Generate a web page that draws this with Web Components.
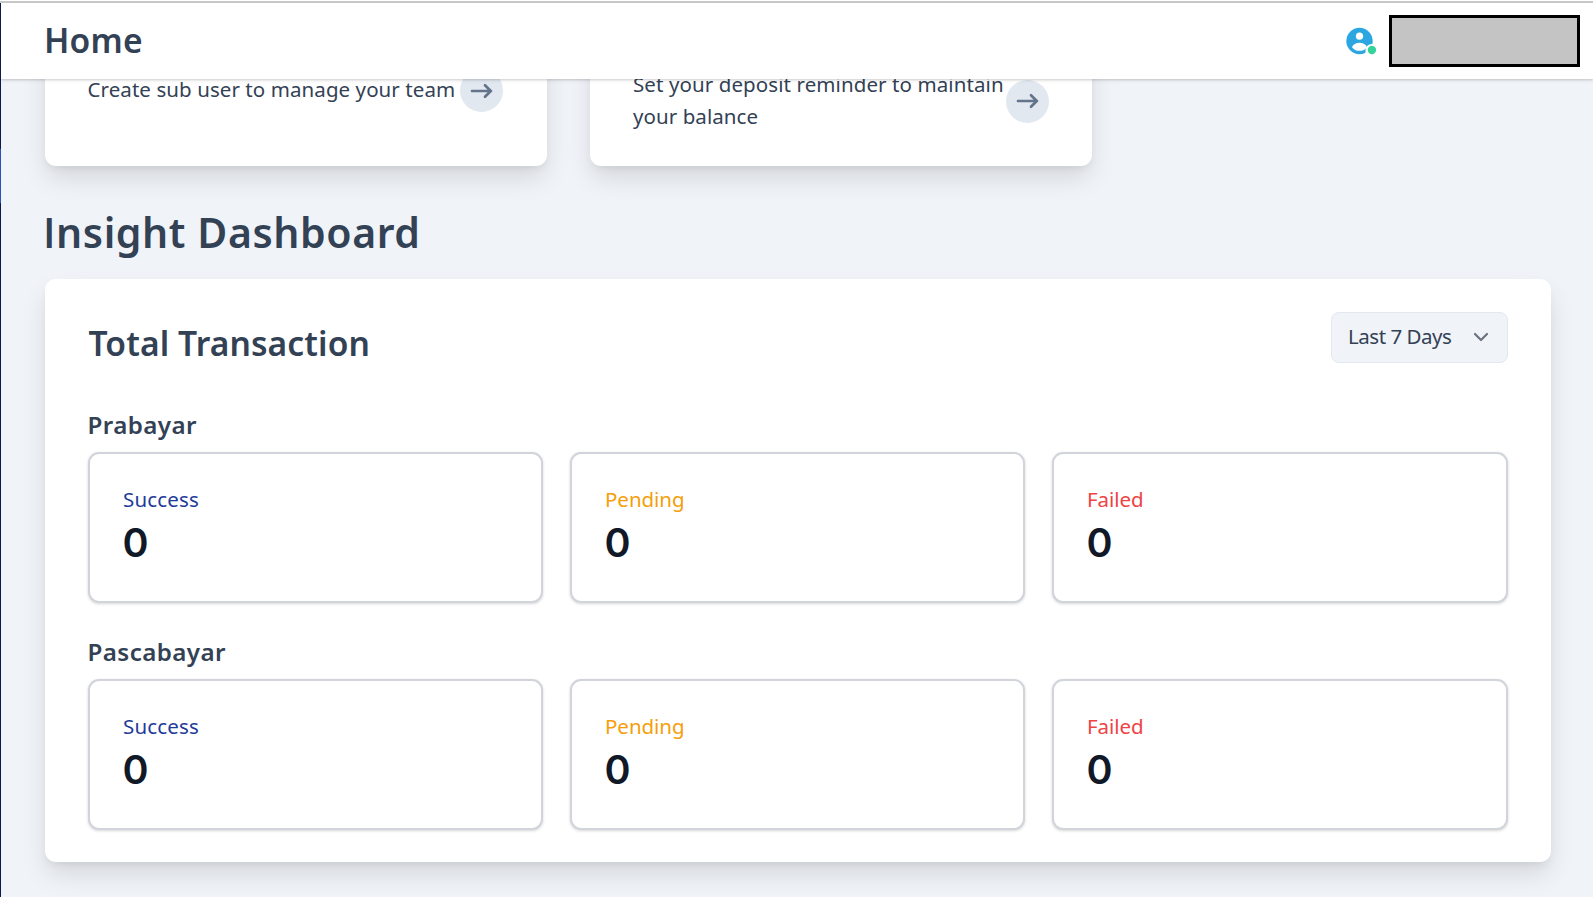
<!DOCTYPE html>
<html lang="en">
<head>
<meta charset="utf-8">
<title>Home</title>
<style>
html, body { margin: 0; height: 100%; overflow: hidden; }
body { font-family: "Noto Sans", "Open Sans", sans-serif; color: #334155; background: #f0f3f8; }
</style>
</head>
<body>
<home-page></home-page>
<script>
function define(name, html, setup) {
  const template = document.createElement('template');
  template.innerHTML = html;
  customElements.define(name, class extends HTMLElement {
    connectedCallback() {
      if (this.shadowRoot) return;
      this.attachShadow({ mode: 'open' }).append(template.content.cloneNode(true));
      if (setup) setup(this, this.shadowRoot);
    }
  });
}

// A single line of text, tracked so that its glyphs span the given width.
define('tracked-text', `
<style>
:host { display: block; white-space: nowrap; }
</style><slot></slot>`, el => {
  const text = el.textContent;
  const cs = getComputedStyle(el);
  const ctx = document.createElement('canvas').getContext('2d');
  ctx.font = cs.fontWeight + ' ' + cs.fontSize + ' "Noto Sans"';
  const m = ctx.measureText(text);
  const ink = m.actualBoundingBoxRight + m.actualBoundingBoxLeft;
  const span = parseFloat(el.getAttribute('span'));
  if (text.length > 1) el.style.letterSpacing = ((span - ink) / (text.length - 1)).toFixed(3) + 'px';
});

define('user-avatar', `
<style>:host { display: block; width: 32px; height: 32px; } svg { display: block; }</style>
<svg width="32" height="32" viewBox="0 0 32 32">
  <circle cx="13.5" cy="16" r="13.2" fill="#2ca6e0"/>
  <circle cx="13.5" cy="11.2" r="3.6" fill="#fff"/>
  <path d="M6 22.2C7 19.2 10.200 17.700 13.500 17.700s6.500 1.500 7.500 4.500C19.400 24.700 16.600 25.800 13.500 25.800s-5.900-1.100-7.500-3.600z" fill="#fff"/>
  <path d="M19.500 32v-6.500a6.400 6.400 0 0 1 6.400-6.600H32V32z" fill="#fff"/>
  <circle cx="25.900" cy="25" r="4.200" fill="#34d399"/>
</svg>`);

define('page-header', `
<style>
:host { display: flex; position: relative; z-index: 2; box-sizing: border-box; height: 76px; flex: none;
  align-items: center; padding: 0 13px 0 43px; background: #fff; margin-left: 1px;
  box-shadow: 0 1px 4px rgba(0,0,0,.12), 0 1px 2px rgba(0,0,0,.1); }
tracked-text { flex: 1; font-size: 33.600px; font-weight: 640; line-height: 40px; padding-bottom: 2px; }
user-avatar { margin-right: 11px; }
.account { box-sizing: border-box; width: 191px; height: 52px; border: 3px solid #000; background: #c4c4c4; }
</style>
<tracked-text span="95">Home</tracked-text>
<user-avatar></user-avatar>
<div class="account"></div>`);

define('arrow-button', `
<style>
:host { display: flex; flex: none; width: 43px; height: 43px; border-radius: 50%; background: #e2e8f0;
  align-items: center; justify-content: center; }
</style>
<svg width="24" height="18" viewBox="0 0 24 18" fill="none" stroke="#64748b" stroke-width="2.700" stroke-linecap="round" stroke-linejoin="round">
  <path d="M2 9h19M15 3.300L20.800 9l-5.800 5.700"/>
</svg>`);

define('action-card', `
<style>
:host { display: block; box-sizing: border-box; width: 502px; height: 147px; padding: 49px 43px 0; background: #fff;
  border-radius: 11px; box-shadow: 0 13px 26px -2px rgba(0,0,0,.12), 0 5px 8px -3px rgba(0,0,0,.07); }
.row { display: flex; align-items: center; justify-content: space-between; }
.copy { font-size: 20.500px; font-weight: 370; line-height: 32px; padding-bottom: 2px; }
:host([narrow]) { padding: 50px 44px 0 42.500px; }
:host([narrow]) .copy { padding-bottom: 4px; }
</style>
<div class="row"><div class="copy"><slot></slot></div><arrow-button></arrow-button></div>`);

define('range-select', `
<style>
:host { display: flex; box-sizing: border-box; width: 177px; height: 51px; padding: 0 18px 0 16px; border: 1px solid #e2e8f0;
  border-radius: 8px; background: #f0f3f8; align-items: center; justify-content: space-between; font-size: 20.500px; font-weight: 370; line-height: 30px; }
tracked-text { padding-bottom: 3px; }
svg { margin-bottom: 1px; }
</style>
<tracked-text span="102">Last 7 Days</tracked-text>
<svg width="16" height="12" viewBox="0 0 16 12" fill="none" stroke="#6b7280" stroke-width="2.200" stroke-linecap="round" stroke-linejoin="round"><path d="M2 3l6 6 6-6"/></svg>`);

define('stat-card', `
<style>
:host { display: block; box-sizing: border-box; height: 151px; padding: 30px 33px 0; background: #fff;
  border: 2px solid #d1d5db; border-radius: 11px; box-shadow: 0 1px 3px rgba(0,0,0,.16); }
.label { font-size: 20.500px; font-weight: 370; line-height: 30px; }
.value { font-family: Inter, sans-serif; font-size: 39.500px; line-height: 50px; font-weight: 640; color: #111827; margin: 4px 0 0 -.500px; }
</style>
<div class="label"><slot></slot></div><div class="value"></div>`, (el, root) => {
  root.querySelector('.label').style.color = el.getAttribute('tone');
  root.querySelector('.value').textContent = el.getAttribute('value');
});

define('stat-group', `
<style>
:host { display: block; height: 227px; }
.title { font-size: 24.200px; line-height: 32px; font-weight: 640; padding-bottom: 11px; margin-left: -.500px; }
.grid { display: grid; grid-template-columns: 455px 455px 1fr; gap: 27px; }
</style>
<div class="title"><slot></slot></div>
<div class="grid">
  <stat-card tone="#1e3a9a" value="0"><tracked-text span="74">Success</tracked-text></stat-card>
  <stat-card tone="#f59e0b" value="0"><tracked-text span="77">Pending</tracked-text></stat-card>
  <stat-card tone="#ef4444" value="0"><tracked-text span="54">Failed</tracked-text></stat-card>
</div>`);

define('insight-panel', `
<style>
:host { display: block; box-sizing: border-box; height: 583px; padding: 33px 43px 0; background: #fff; border-radius: 11px;
  box-shadow: 0 13px 26px -2px rgba(0,0,0,.12), 0 5px 8px -3px rgba(0,0,0,.07); }
.head { display: flex; justify-content: space-between; height: 97px; }
.title { font-size: 33.600px; line-height: 44px; font-weight: 640; padding: 9px 0 0 .500px; }
</style>
<div class="head"><div class="title"><tracked-text span="279">Total Transaction</tracked-text></div><range-select></range-select></div>
<stat-group><tracked-text span="107.500">Prabayar</tracked-text></stat-group>
<stat-group><tracked-text span="136.500">Pascabayar</tracked-text></stat-group>`);

define('home-page', `
<style>
:host { display: flex; flex-direction: column; height: 897px; box-sizing: border-box; position: relative; overflow: hidden; border-top: 1px solid #fff; }
.rule { flex: none; height: 2px; background: #ccc; }
.rail { position: absolute; left: 0; top: 2px; bottom: 0; width: 1px; z-index: 3;
  background: linear-gradient(#0f1a4c 0 146px, #2f4fc4 146px 200px, #0f1a4c 200px); }
main { margin-top: -60px; padding: 0 42px 0 45px; }
.actions { display: flex; gap: 43px; }
.title { font-size: 41px; line-height: 56px; font-weight: 640; padding: 38px 0 19px; margin-left: -2px; }
.plain { font-family: "Open Sans"; line-height: 1; }
</style>
<div class="rule"></div>
<div class="rail"></div>
<page-header></page-header>
<main>
  <div class="actions">
    <action-card narrow><tracked-text span="365.500">Create sub user to manage your team</tracked-text></action-card>
    <action-card><tracked-text span="369">Set your deposit reminder to maintain</tracked-text><tracked-text span="124.500">your balance</tracked-text></action-card>
  </div>
  <div class="title"><tracked-text span="376"><span class="plain">I</span>nsight Dashboard</tracked-text></div>
  <insight-panel></insight-panel>
</main>`);
</script>
</body>
</html>
